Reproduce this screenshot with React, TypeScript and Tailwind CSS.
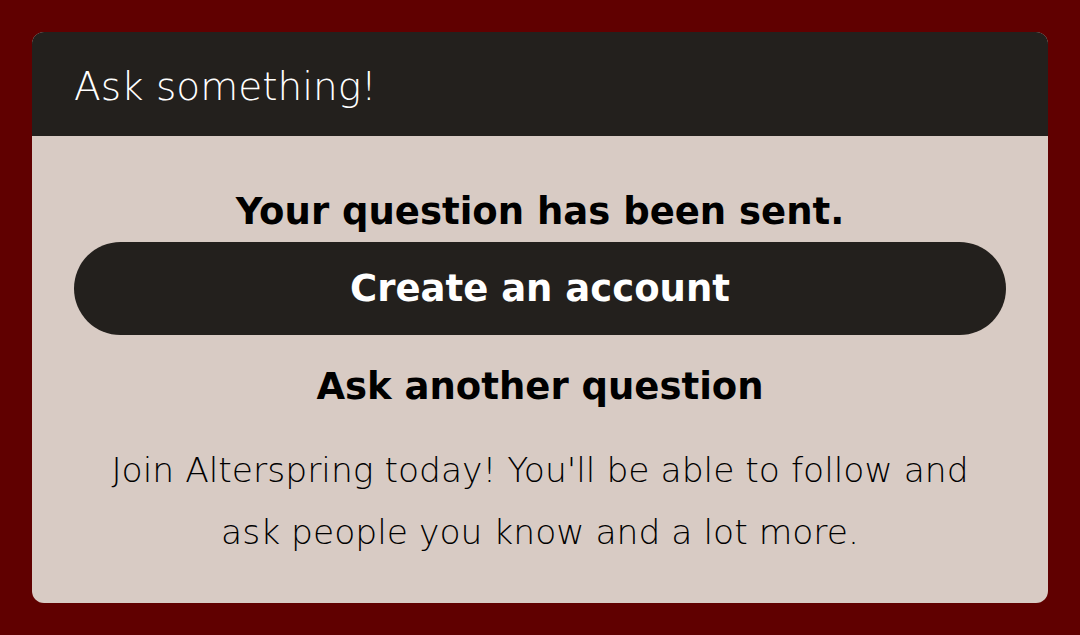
export default function App() {
  return (
    <div
      className="w-[1080px] h-[635px] bg-[#600000] p-8 box-border"
      style={{ fontFamily: "'DejaVu Sans', 'Noto Sans', sans-serif" }}
    >
      <div className="w-[1016px] h-[571px] rounded-[12px] overflow-hidden bg-[#d8cbc4] flex flex-col">
        <div className="h-[104px] bg-[#23201d] flex items-center px-[42px] pt-[4px] shrink-0">
          <h1 className="text-white text-[39px] font-extralight leading-none">Ask something!</h1>
        </div>
        <div className="flex flex-col items-center px-[42px] pt-[52px]">
          <p className="text-[37px] font-bold text-black leading-[48px] whitespace-nowrap">
            Your question has been sent.
          </p>
          <button className="mt-[6px] w-full h-[93px] rounded-full bg-[#23201d] text-white text-[37px] font-bold">
            Create an account
          </button>
          <button className="mt-[28px] text-[37px] font-bold text-black leading-[48px]">
            Ask another question
          </button>
          <p className="mt-[28px] w-[900px] text-center text-[34.5px] font-extralight text-black leading-[62px]">
            Join Alterspring today! You'll be able to follow and ask people you know and a lot more.
          </p>
        </div>
      </div>
    </div>
  );
}
